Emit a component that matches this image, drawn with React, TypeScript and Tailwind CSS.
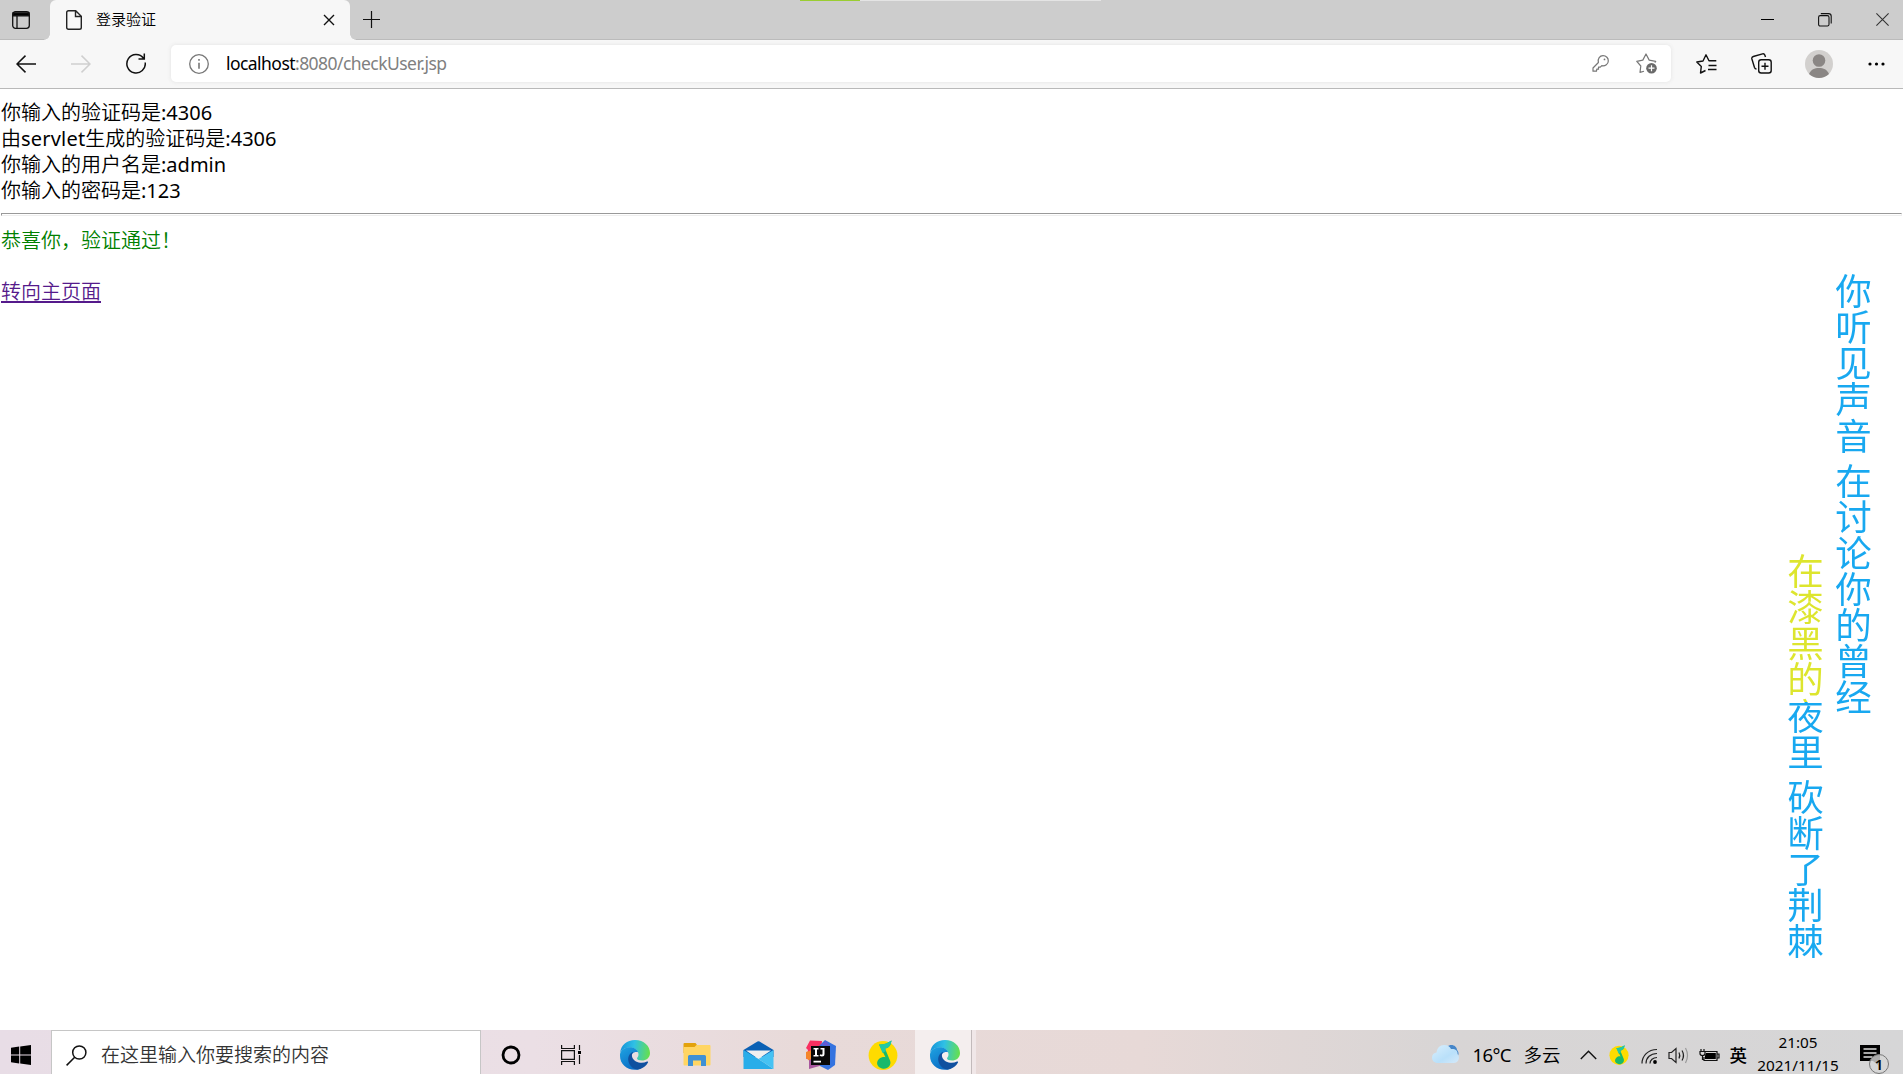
import React from "react";

const latin = "font-['Noto_Sans','Noto_Sans_CJK_SC',sans-serif]";

function EdgeLogo({ id }: { id: string }) {
  return (
    <svg width="30" height="30" viewBox="0 0 30 30">
      <defs>
        <linearGradient id={id + "a"} x1="0" y1="0.4" x2="1" y2="0.5">
          <stop offset="0" stopColor="#1593d8" />
          <stop offset="0.45" stopColor="#2fc0e6" />
          <stop offset="1" stopColor="#66e04c" />
        </linearGradient>
        <linearGradient id={id + "b"} x1="0" y1="0" x2="0.6" y2="1">
          <stop offset="0" stopColor="#1fa4e2" />
          <stop offset="1" stopColor="#0b6cc4" />
        </linearGradient>
      </defs>
      <path d="M0 13C1 5 7 0 15 0c9 0 15 6 15 13 0 5-4 7.500-8 7.500-3 0-5-1-5-2 0-1 1.500-1.500 1.500-4 0-4-4-7-8.500-7C5 7.500 1 10 0 13z" fill={`url(#${id}a)`} />
      <path d="M0 14C1 9.500 5.500 7.300 9.500 7.300c4.500 0 7.500 2.300 8.700 5C15 11 11 13 10.500 18c-.4 5 3 10 9 11.200C9 32 0 25 0 16z" fill={`url(#${id}b)`} />
      <path d="M13.500 11.800C9.500 13 7.800 17 8.300 20.500 9 26 14 30 19 29.300c4-.8 7.500-3.800 9-6.800.3-.8-.3-1.300-1-1-5 2.500-12.500 1.200-14.700-4-.8-2-.4-4.300 1.200-5.700z" fill="#10509f" />
    </svg>
  );
}

function MusicLogo({ size }: { size: number }) {
  return (
    <svg width={size} height={size} viewBox="0 0 30 30">
      <circle cx="15" cy="15.500" r="14.400" fill="#fedb00" />
      <path d="M11 4.500C15 5 20 3 23.500.5 23 5 21 8 17 8.500l5 12c2 5-3 9.500-8 8-5-1.500-6.500-6-3-9.500 2-2 5-2.200 6.500-1.800z" fill="#18b96b" />
      <path d="M11 4.500C15 5 20 3 23.500.5 23 5 21 8 17 8.500l1 2.500-3.500 2z" fill="#25c9a4" />
    </svg>
  );
}

function TabStrip() {
  return (
    <div className="relative flex h-10 shrink-0 items-stretch bg-[#cdcdcd] shadow-[inset_0_-1px_0_#bbb]">
      <div className="flex w-[50px] items-center pl-3">
        <svg width="18" height="18" viewBox="0 0 18 18" fill="none" stroke="#111" strokeWidth="1.3">
          <rect x=".7" y=".7" width="16.600" height="16.600" rx="2.800" />
          <path d="M1 1.800h16v3H1z" fill="#000" />
          <path d="M5 5v12" />
        </svg>
      </div>
      <div className="relative flex w-[300px] items-center rounded-t-[6px] bg-[#f7f7f7]">
        <svg className="ml-4" width="16" height="20" viewBox="0 0 16 20" fill="none" stroke="#222" strokeWidth="1.4">
          <path d="M2.500.7H9.700L15.300 6.300V17.500Q15.300 19.300 13.500 19.300H2.500Q.7 19.300 .7 17.500V2.500Q.7.7 2.500.7zM9.500 1v5.500H15" />
        </svg>
        <span className={`mb-[2px] ml-[14px] text-[15px] leading-5 font-[350] text-black ${latin}`}>登录验证</span>
        <svg className="mr-[15px] ml-auto" width="12" height="12" viewBox="0 0 12 12" stroke="#111" strokeWidth="1.400">
          <path d="M1 1l10 10M11 1L1 11" />
        </svg>
        <i className="absolute bottom-0 -left-[6px] size-[6px] bg-[radial-gradient(circle_at_0_0,#cdcdcd_5.500px,#f7f7f7_6px)]" />
        <i className="absolute -right-[6px] bottom-0 size-[6px] bg-[radial-gradient(circle_at_100%_0,#cdcdcd_5.500px,#f7f7f7_6px)]" />
      </div>
      <svg className="mt-[11px] ml-[13px]" width="17" height="17" viewBox="0 0 17 17" stroke="#111" strokeWidth="1.200">
        <path d="M0 8.500h17M8.500 0v17" />
      </svg>
      <div className="absolute top-0 left-[800px] flex h-px w-[301px] bg-[#e4e4e4]">
        <div className="w-[60px] bg-[#9acd32]" />
      </div>
      <div className="ml-auto flex h-10 items-start">
        <svg className="mt-[19px] mr-11" width="13" height="1"><path d="M0 0h13v1H0z" /></svg>
        <svg className="mt-[13px] mr-[44px]" width="14" height="14" viewBox="0 0 14 14" fill="none" stroke="#111" strokeWidth="1.100">
          <rect x=".6" y="2.600" width="10.400" height="10.400" rx="1.600" />
          <path d="M2.800.6H10.500Q13.200.6 13.200 3.200V10.500" />
        </svg>
        <svg className="mt-[13px] mr-[14px]" width="13" height="13" viewBox="0 0 13 13" stroke="#333" strokeWidth="1.100"><path d="M.4.4l12.200 12.200M12.600.4L.4 12.600" /></svg>
      </div>
    </div>
  );
}

function Toolbar() {
  return (
    <div className="flex h-[49px] shrink-0 items-center border-b border-[#b9b9b9] bg-[#f7f7f7] pb-px">
      <svg className="ml-4" width="20" height="18" viewBox="0 0 20 18" fill="none" stroke="#111" strokeWidth="1.500"><path d="M20 9H1M9.500.6L1 9l8.500 8.400" /></svg>
      <svg className="ml-[35px]" width="20" height="18" viewBox="0 0 20 18" fill="none" stroke="#cfcfcf" strokeWidth="1.500"><path d="M0 9h19M10.500.6L19 9l-8.500 8.400" /></svg>
      <svg className="ml-[35px]" width="20" height="21" viewBox="0 0 20 21" fill="none" stroke="#111" strokeWidth="1.500"><path d="M17.500 5.300A9.200 9.200 0 1 0 19.200 9.500M18.300 .5V6H12.500" /></svg>
      <div className="ml-[25px] flex h-[37px] w-[1500px] items-center rounded-[5px] bg-white shadow-[0_0_4px_#e2e2e2]">
        <svg className="ml-[18px]" width="20" height="20" viewBox="0 0 20 20" fill="none" stroke="#777" strokeWidth="1.300">
          <circle cx="10" cy="10" r="9.300" /><path d="M10 8.700v6M10 5v1.800" strokeWidth="1.600" />
        </svg>
        <span className="mb-[2px] ml-[17px] font-['Noto_Sans',sans-serif] text-[17.500px] leading-6 font-normal tracking-[-0.550px] whitespace-pre text-[#808080]"><span className="text-black">localhost</span>:8080/checkUser.jsp</span>
        <svg className="ml-auto" width="17" height="17" viewBox="0 0 17 17" fill="none" stroke="#777" strokeWidth="1.200" strokeLinejoin="round">
          <path d="M6.400 7.500C5.500 3.500 7.800.7 11 .7c3.200 0 5.400 2.300 5.300 5.200-.1 3.200-3 5.400-6.500 4.800L8.300 12.200H6.500v2H4.800l-.3 2H1V13z" />
          <circle cx="12.500" cy="4.400" r=".9" fill="#777" stroke="none" />
        </svg>
        <svg className="mr-[14px] ml-[27px]" width="21" height="21" viewBox="0 0 21 21" fill="none" stroke="#777" strokeWidth="1.200" strokeLinejoin="round">
          <path d="M8 18.200L4 19.400 4.800 13 .8 8.300 6.800 7.100 10 1l3.200 6.100 6.500 1.200-1 1.200" />
          <circle cx="15.500" cy="15.200" r="5.300" fill="#6a6a6a" stroke="none" />
          <path d="M12.500 15.200h6M15.500 12.200v6" stroke="#fff" />
        </svg>
      </div>
      <svg className="ml-[25px]" width="21" height="20" viewBox="0 0 21 20" fill="none" stroke="#111" strokeWidth="1.400" strokeLinejoin="round">
        <path d="M9.500 16.500L4.500 19 5.300 12.500 .8 8 7 7 10 .8l3 6h7.300M12.500 11.500h8M12 15.500h8.500" />
      </svg>
      <svg className="ml-[34px]" width="21" height="21" viewBox="0 0 21 21" fill="none" stroke="#111" strokeWidth="1.400">
        <rect x="7.700" y="6.700" width="12.500" height="13.300" rx="2.500" />
        <path d="M10.500 13.300h7M14 9.800v7M14.500 4L13.800 2Q13.200.4 11.500.9L2.300 3.500Q.4 4.100.9 6L3.500 14.500Q4 16 5.500 16" />
      </svg>
      <svg className="ml-[33px]" width="28" height="28" viewBox="0 0 28 28">
        <circle cx="14" cy="14" r="14" fill="#d2d0ce" />
        <circle cx="14" cy="10.500" r="6.300" fill="#8a8684" />
        <path d="M4 24C6 19.500 9.500 18 14 18s8 1.500 10 6c-3 2.800-6.500 4-10 4s-7-1.200-10-4z" fill="#8a8684" />
      </svg>
      <svg className="ml-[35px]" width="17" height="4" viewBox="0 0 17 4"><circle cx="2" cy="2" r="1.600" /><circle cx="8.500" cy="2" r="1.600" /><circle cx="15" cy="2" r="1.600" /></svg>
    </div>
  );
}

function Lyrics() {
  const column = "bg-clip-text font-['Noto_Sans_CJK_SC',sans-serif] text-[36.500px] leading-[37px] tracking-[-0.400px] whitespace-pre [word-spacing:1.500px] font-normal text-transparent [writing-mode:vertical-rl]";
  return (
    <div className="absolute top-[184px] right-[31px] flex items-start gap-[11px]">
      <p className={`${column} mt-[280px] bg-[linear-gradient(#dde52e_149px,#18a8f0_149px)]`}>在漆黑的夜里 砍断了荆棘</p>
      <p className={`${column} bg-[#18a8f0]`}>你听见声音 在讨论你的曾经</p>
    </div>
  );
}

function PageContent() {
  return (
    <main className={`relative min-h-0 flex-1 bg-white pt-[11px] pl-px text-[20px] leading-[26px] font-[350] text-black ${latin}`}>
      <p>你输入的验证码是<span className="font-normal">:4306</span></p>
      <p>由<span className="font-normal tracking-[0.200px]">servlet</span>生成的验证码是<span className="font-normal">:4306</span></p>
      <p>你输入的用户名是<span className="font-normal">:admin</span></p>
      <p>你输入的密码是<span className="font-normal">:123</span></p>
      <div className="mt-[9px] mr-px h-[3px] border border-[#999] border-r-[#eee] border-b-[#eee]" />
      <p className="mt-[12px] text-[#008000]">恭喜你，验证通过！</p>
      <p className="mt-[25px]"><a className="text-[#551a8b] underline decoration-2 underline-offset-2">转向主页面</a></p>
      <Lyrics />
    </main>
  );
}

function Taskbar() {
  return (
    <footer className={`flex h-11 shrink-0 items-stretch overflow-hidden bg-[linear-gradient(90deg,#e8dde6_0%,#ebdfe5_28%,#e8dad9_42%,#e7d9d7_60%,#d8d5d5_76%,#d6d6d7_100%)] text-black ${latin}`}>
      <div className="w-[51px] pt-[15px] pl-[11px]">
        <svg width="20" height="20" viewBox="0 0 20 20"><path d="M0 2.800L8.200 1.600V9.400H0zM9.200 1.400L20 0V9.400H9.200zM0 10.500H8.200V18.400L0 17.200zM9.200 10.500H20V20L9.200 18.500z" /></svg>
      </div>
      <div className="flex w-[430px] border border-b-0 border-[#c6c6c6] bg-white pl-[14px]">
        <svg className="mt-[14px]" width="21" height="21" viewBox="0 0 21 21" fill="none" stroke="#111" strokeWidth="1.500"><circle cx="13.300" cy="7.500" r="6.600" /><path d="M8.700 12.300L.6 20.400" /></svg>
        <span className="mt-[12px] ml-[14px] text-[19px] leading-6 font-[350] text-[#333]">在这里输入你要搜索的内容</span>
      </div>
      <svg className="mt-[15px] ml-5" width="20" height="20" viewBox="0 0 20 20"><circle cx="10" cy="10" r="8" fill="none" stroke="#000" strokeWidth="2.800" /></svg>
      <svg className="mt-[15px] ml-10" width="21" height="20" viewBox="0 0 21 20" fill="none" stroke="#111" strokeWidth="1.200">
        <path d="M.6 0v3.500h12.800V0M.6 20v-3.500h12.800V20M.6 5.600h12.800v8.800H.6zM18.500 0v5M18.500 10v9" /><path d="M17 6h3v3h-3z" fill="#000" stroke="none" />
      </svg>
      <div className="mt-[10px] ml-[38px]"><EdgeLogo id="e1" /></div>
      <svg className="mt-[13px] ml-[33px]" width="28" height="24" viewBox="0 0 28 24">
        <path d="M.5 1Q.5 0 1.500 0h11l1.500 2h12.500v8H.5z" fill="#e3a20c" /><path d="M.5 4h11l2-2h13q1 0 1 1v18.500q0 1-1 1H1.500q-1 0-1-1z" fill="#ffd563" />
        <path d="M5 23V13.500q0-1.500 1.500-1.500h15q1.500 0 1.500 1.500V23h-5v-5.500h-8V23z" fill="#3f91d5" />
      </svg>
      <svg className="mt-[11px] ml-[32px]" width="31" height="28" viewBox="0 0 31 28">
        <path d="M.5 9L14.500.5q1-.6 2 0L30.500 9v7H.5z" fill="#0a60b4" /><path d="M3 9.500h25L15.500 18z" fill="#f0f0f0" />
        <path d="M.5 9v19h30L15.500 18z" fill="#29ade9" /><path d="M15.500 18l15-9v19z" fill="#46c2f3" />
      </svg>
      <svg className="mt-[10px] ml-[31px]" width="31" height="30" viewBox="0 0 31 30">
        <path d="M5 .5L17 1l-1 12L1 19 3 10 1 8z" fill="#f92f60" /><path d="M1 12l6-2v13L1 18z" fill="#f58529" /><path d="M4 20l12-5 2 10-14 4z" fill="#a8579e" /><path d="M14 6L20 0l11 6-1 19-7 5-8-4z" fill="#3473e0" /><path d="M16 5l5-4 4 5z" fill="#655ad2" />
        <path d="M6 6h19v19H6z" fill="#080808" />
        <path d="M8.500 8h5v1.500h-1.500V15h1.500v1.500h-5V15H10V9.500H8.500zM15.500 8h4v6q0 2.500-2.500 2.500-1.500 0-2.500-1l1-1.200q2 1.200 2-.5V9.600h-2zM8.500 20.700h7.500v1.700H8.500z" fill="#fff" />
      </svg>
      <div className="mt-[10px] ml-[32px]"><MusicLogo size={30} /></div>
      <div className="ml-[17px] w-[56px] bg-[#f4eeee] pt-[10px] pl-[15px]"><EdgeLogo id="e2" /></div>
      <div className="w-[5px] border-l border-[#c2babb] bg-[#f0e7e8]" />
      <div className="ml-auto flex">
        <svg className="mt-[14px]" width="28" height="20" viewBox="0 0 28 20">
          <defs><linearGradient id="cloud" x1="0" y1="0" x2="1" y2="1"><stop stopColor="#d9effd" /><stop offset=".6" stopColor="#b9e0fa" /><stop offset="1" stopColor="#d5e9f9" /></linearGradient></defs>
          <path d="M15 3c4-4 10-1 10 3 2 2 2 5 0 7z" fill="#4686c9" />
          <path d="M6 19C2 19 0 16.500 0 13.500 0 10.500 2 9 4.500 8.500 5 4 8 1 12 1c4 0 6 2 7 4 5-.5 7 2.500 6.500 5 3 3 1 9-3.500 9z" fill="url(#cloud)" />
        </svg>
        <span className="mt-[13px] ml-[12px] w-[51px] text-[18.500px] leading-6 font-normal tracking-[-0.600px] whitespace-nowrap">16°C</span>
        <span className="mt-[13px] text-[18.500px] leading-6 font-[350]">多云</span>
        <svg className="mt-[20px] ml-[19px]" width="17" height="10" viewBox="0 0 17 10" fill="none" stroke="#111" strokeWidth="1.400"><path d="M.8 9L8.500 1.200 16.200 9" /></svg>
        <div className="mt-[15px] ml-[12px]"><MusicLogo size={20} /></div>
        <svg className="mt-[18px] ml-[12px]" width="17" height="16" viewBox="0 0 17 16" fill="none" stroke="#222" strokeWidth="1.200">
          <path d="M1 15.500C1 8 7 1.500 16 1.500M5 15.500C5 9.500 9.500 5.500 16 5.500M9 15.500C9 12 12 9.500 16 9.500" /><circle cx="14" cy="14" r="1.900" fill="#000" stroke="none" />
        </svg>
        <svg className="mt-[17px] ml-[10px]" width="21" height="17" viewBox="0 0 21 17" fill="none" stroke="#222" strokeWidth="1.200">
          <path d="M1 5.500h2.500L8 1.500v14L3.500 11.500H1zM11 5.500Q12.500 8.500 11 11.500M14 3.500Q17 8.500 14 13.500" /><path d="M17.500 1Q21.500 8.500 17.500 16" stroke="#999" />
        </svg>
        <svg className="mt-[18px] ml-[10px]" width="21" height="14" viewBox="0 0 21 14">
          <path d="M5.500 3.500H18V12.500H5V9M18.500 6h1.500v4h-1.500M1 3.500h5v2Q6 7.500 3.500 7.500 1 7.500 1 5.500zM2 3V1M5 3V1M3.500 8v3.500H5" fill="none" stroke="#111" strokeWidth="1.200" /><path d="M7 5h9.800v6H6V7.500z" />
        </svg>
        <span className="mt-[13px] ml-[10px] text-[17.500px] leading-6 font-medium">英</span>
        <div className="mt-px ml-[8px] flex w-[86px] shrink-0 flex-col items-center text-[15.300px] leading-[23px] font-normal tracking-[0.020px]"><span>21:05</span><span>2021/11/15</span></div>
        <div className="relative ml-[19px] w-[43px] pt-[15px]">
          <svg width="20" height="20" viewBox="0 0 20 20"><path d="M0 0h20v16h-2v4l-5-4H0z" /><path d="M3.500 4h13M3.500 8h13M3.500 12h9" stroke="#ddd" strokeWidth="1.300" /></svg>
          <span className="absolute top-[24px] left-[9px] flex size-5 items-center justify-center rounded-full border border-[#777] bg-[#d6d6d6]/80 text-[15px] leading-none font-semibold">1</span>
        </div>
      </div>
    </footer>
  );
}

export default function App() {
  return (
    <div className="flex h-[1074px] w-[1903px] flex-col overflow-hidden bg-white">
      <TabStrip />
      <Toolbar />
      <PageContent />
      <Taskbar />
    </div>
  );
}
